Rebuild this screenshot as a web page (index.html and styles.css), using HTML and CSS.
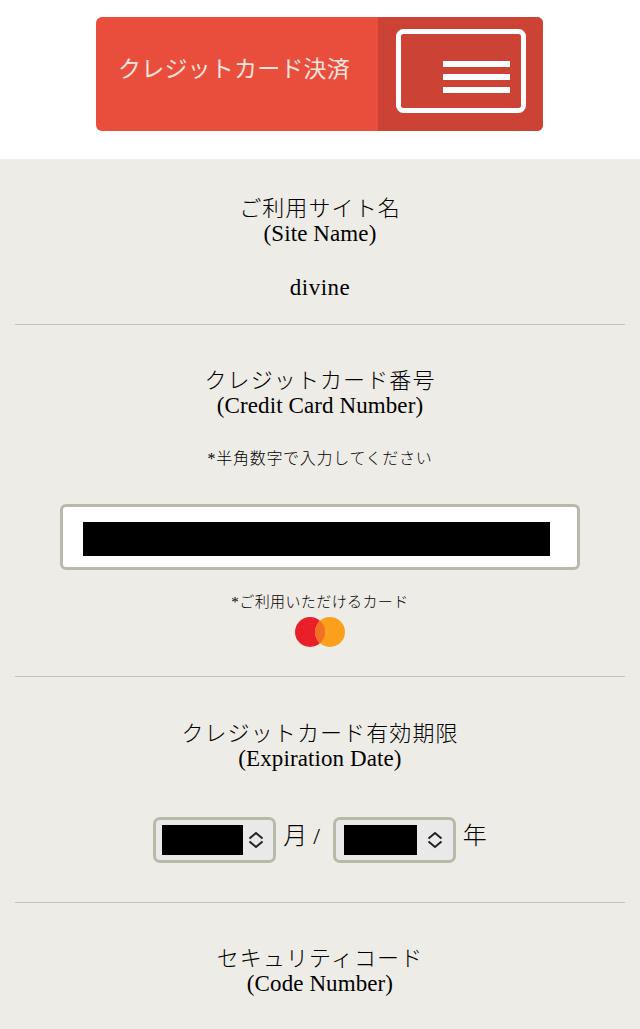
FILE: index.html
```html
<!DOCTYPE html>
<html lang="ja">
<head>
    <meta charset="UTF-8">
    <meta name="viewport" content="width=device-width, initial-scale=1.0">
    <title>クレジットカード決済</title>
    <link rel="stylesheet" href="styles.css">
</head>
<body>
    <header class="header">
        <div class="banner">
            <div class="banner-label">クレジットカード決済</div>
            <div class="banner-icon">
                <svg width="130" height="84" viewBox="0 0 130 84">
                    <rect x="2.500" y="2.500" width="125" height="79" rx="5" fill="none" stroke="#fff" stroke-width="5"/>
                    <rect x="47" y="32" width="67" height="6" fill="#fff"/>
                    <rect x="47" y="45" width="67" height="6" fill="#fff"/>
                    <rect x="47" y="58" width="67" height="6" fill="#fff"/>
                </svg>
            </div>
        </div>
    </header>

    <main class="form">
        <section class="field field-site">
            <h2 class="field-title">ご利用サイト名<span class="field-sub">(Site Name)</span></h2>
            <p class="site-name">divine</p>
        </section>

        <section class="field field-card">
            <h2 class="field-title">クレジットカード番号<span class="field-sub">(Credit Card Number)</span></h2>
            <p class="note note-digits">*半角数字で入力してください</p>
            <div class="card-input"><div class="redacted"></div></div>
            <p class="note note-brands">*ご利用いただけるカード</p>
            <svg class="brand" width="50" height="32" viewBox="0 0 50 32">
                <circle cx="15" cy="16" r="15" fill="#e9202a"/>
                <circle cx="35" cy="16" r="15" fill="#fba01d"/>
                <path d="M25 4.800a15 15 0 0 1 0 22.400a15 15 0 0 1 0-22.400z" fill="#f46f25"/>
            </svg>
        </section>

        <section class="field field-date">
            <h2 class="field-title">クレジットカード有効期限<span class="field-sub">(Expiration Date)</span></h2>
            <div class="date-row">
                <div class="select select-month">
                    <div class="redacted"></div>
                    <svg class="select-arrows" width="16" height="18" viewBox="0 0 16 18"><path d="M1.500 7.500L8 2l6.500 5.500M1.500 10.500L8 16l6.500-5.500" fill="none" stroke="#222" stroke-width="2"/></svg>
                </div>
                <span class="date-unit">月 /</span>
                <div class="select select-year">
                    <div class="redacted"></div>
                    <svg class="select-arrows" width="16" height="18" viewBox="0 0 16 18"><path d="M1.500 7.500L8 2l6.500 5.500M1.500 10.500L8 16l6.500-5.500" fill="none" stroke="#222" stroke-width="2"/></svg>
                </div>
                <span class="date-unit">年</span>
            </div>
        </section>

        <section class="field field-code">
            <h2 class="field-title">セキュリティコード<span class="field-sub">(Code Number)</span></h2>
        </section>
    </main>
</body>
</html>
```

FILE: styles.css
```css
body {
    margin: 0;
    padding: 0;
    height: 1029px;
    overflow: hidden;
    background-color: #eeece7;
    color: #000;
    font-family: "Liberation Serif", "Noto Sans CJK JP", serif;
}

.header {
    height: 159px;
    background-color: #fff;
    display: flex;
    justify-content: center;
    align-items: flex-start;
    padding: 17px 1px 0 0;
    box-sizing: border-box;
}

.banner {
    width: 447px;
    height: 114px;
    display: flex;
    border-radius: 6px;
    overflow: hidden;
    background-color: #e94e3d;
}

.banner-label {
    width: 282px;
    box-sizing: border-box;
    padding: 28px 0 0 22px;
    color: #fbe3dd;
    font-family: "Noto Sans CJK JP", sans-serif;
    font-size: 23px;
    font-weight: 400;
    line-height: 44px;
    letter-spacing: 0.2px;
    white-space: nowrap;
}

.banner-icon {
    flex: 1;
    background-color: #cc4335;
    padding: 12px 0 0 18px;
}

.banner-icon svg {
    display: block;
}

.form {
    padding: 0 15px;
}

.field {
    text-align: center;
    border-bottom: 1px solid #c4c3be;
    box-sizing: border-box;
}

.field-site {
    height: 166px;
    padding-top: 38px;
}

.field-card {
    height: 352px;
    padding-top: 44px;
}

.field-date {
    height: 226px;
    padding-top: 45px;
}

.field-code {
    border-bottom: 0;
    padding-top: 44px;
}

.field-title {
    margin: 0;
    font-size: 22px;
    font-weight: 300;
    line-height: 24px;
    letter-spacing: 1.1px;
}

.field-sub {
    display: block;
    font-size: 23px;
    line-height: 26px;
    letter-spacing: 0.1px;
    margin-bottom: -2px;
}

.site-name {
    margin: 30px 0 0;
    font-size: 23px;
    line-height: 26px;
    letter-spacing: 0.5px;
}

.note {
    margin: 0;
    font-size: 16px;
    font-weight: 300;
    line-height: 20px;
    letter-spacing: 0.7px;
}

.note-digits {
    margin-top: 32px;
}

.note-brands {
    margin-top: 22px;
    font-size: 15px;
    letter-spacing: 0.4px;
}

.card-input {
    margin: 35px 45px 0;
    height: 66px;
    box-sizing: border-box;
    border: 3px solid #b9b9aa;
    border-radius: 6px;
    background-color: #fff;
    padding: 15px 27px 11px 20px;
    display: flex;
}

.redacted {
    flex: 1;
    background-color: #000;
}

.brand {
    display: block;
    margin: 4px auto 0;
}

.date-row {
    margin-top: 47px;
    display: flex;
    justify-content: center;
    align-items: center;
}

.select {
    width: 123px;
    height: 46px;
    box-sizing: border-box;
    border: 3px solid #b9b9aa;
    border-radius: 7px;
    background-color: #e9e9e9;
    display: flex;
    align-items: center;
}

.select .redacted {
    height: 30px;
}

.select-month {
    padding: 0 9px 0 6px;
    gap: 5px;
}

.select-year {
    padding: 0 10px 0 8px;
    gap: 10px;
}

.date-unit {
    font-size: 24px;
    font-weight: 300;
    line-height: 30px;
    padding: 0 13px 8px 7px;
}

.date-unit:last-child {
    padding-right: 0;
}

.select-arrows {
    flex-shrink: 0;
}
```
